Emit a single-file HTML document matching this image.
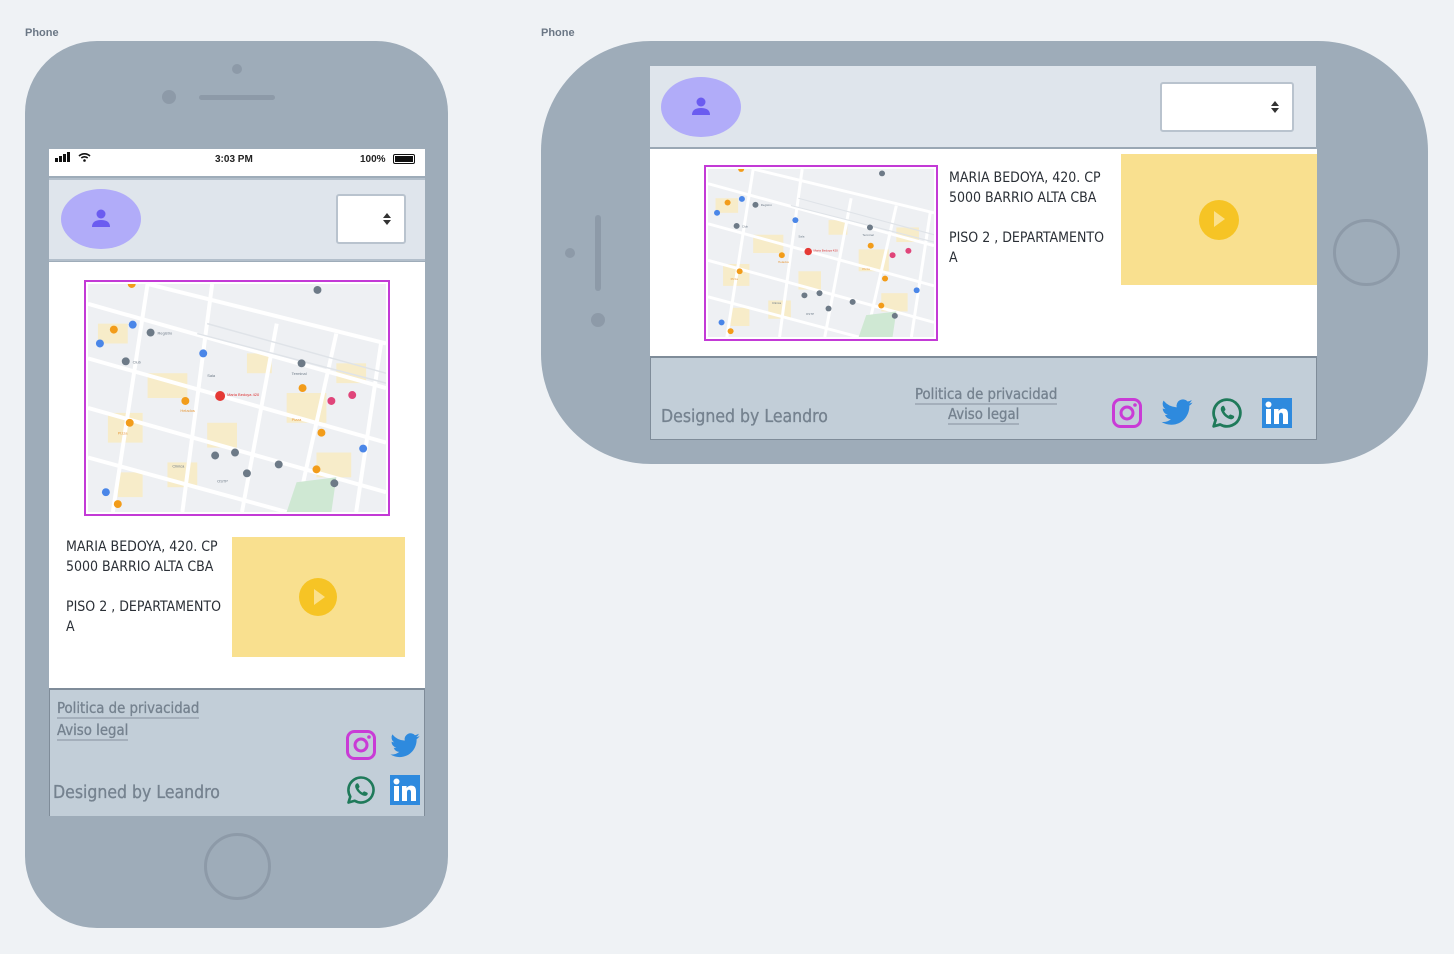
<!DOCTYPE html>
<html><head><meta charset="utf-8"><style>
*{margin:0;padding:0;box-sizing:border-box}
body{width:1454px;height:954px;background:#eff2f5;position:relative;overflow:hidden;font-family:"DejaVu Sans Condensed","Liberation Sans",sans-serif}
.a{position:absolute}
.lbl{font:bold 11px "Liberation Sans",sans-serif;color:#6b7785}
.phone{background:#9eacb9}
.hdr{background:#dfe5ec}
.ftr{background:#c2ced8}
.av{background:#b1acf9;border-radius:50%}
.sel{background:#fff;border:2px solid #b9c3ce;border-radius:3px}
.txt{font-size:14px;color:#2a2f36;line-height:20px;font-family:"DejaVu Sans Condensed","Liberation Sans",sans-serif}
.vid{background:#f9e08f}
.play{width:38px;height:38px;border-radius:50%;background:#f6c425}
.play:after{content:"";position:absolute;left:15px;top:11px;border-left:11px solid #fbe08c;border-top:8px solid transparent;border-bottom:8px solid transparent}
.lnk{font-size:14.8px;color:#75828f;border-bottom:2px solid #a4afbb;line-height:17px;-webkit-text-stroke:0.3px #75828f}
.des{font-size:17.5px;color:#75828f;-webkit-text-stroke:0.3px #75828f}
.home{border:3px solid #8d9aa8;border-radius:50%}
.mapbox{border:2px solid #c33ad6;background:#fff}
</style></head><body>
<svg width="0" height="0" style="position:absolute">
<defs>
<symbol id="map" viewBox="0 0 300 230" preserveAspectRatio="none">
<rect width="300" height="230" fill="#eef0f3"/>
<g fill="#f7ecc9">
<rect x="10" y="40" width="30" height="20"/><rect x="60" y="90" width="40" height="25"/><rect x="20" y="130" width="35" height="30"/><rect x="120" y="140" width="30" height="25"/><rect x="200" y="110" width="40" height="30"/><rect x="230" y="170" width="35" height="25"/><rect x="80" y="180" width="30" height="25"/><rect x="160" y="70" width="25" height="20"/><rect x="250" y="80" width="30" height="20"/><rect x="30" y="190" width="25" height="25"/>
</g>
<g stroke="#fff" stroke-width="4" fill="none">
<path d="M0 20 L300 105"/><path d="M0 75 L300 160"/><path d="M0 125 L300 210"/><path d="M0 175 L200 230"/><path d="M60 0 L300 60"/>
<path d="M60 0 L25 230"/><path d="M125 0 L95 230"/><path d="M190 40 L155 230"/><path d="M250 50 L210 230"/><path d="M295 60 L270 230"/>
</g>
<g stroke="#dfe3e8" stroke-width="1.5" fill="none"><path d="M120 40 L300 90"/><path d="M110 50 L300 100"/></g>
<path d="M210 200 L250 195 L245 230 L200 230Z" fill="#cfe8d3"/>
<g fill="#f29c1a"><circle cx="26" cy="46" r="4"/><circle cx="98" cy="118" r="4"/><circle cx="42" cy="140" r="4"/><circle cx="216" cy="105" r="4"/><circle cx="235" cy="150" r="4"/><circle cx="230" cy="187" r="4"/><circle cx="30" cy="222" r="4"/><circle cx="44" cy="0" r="4"/></g>
<g fill="#6d7a87"><circle cx="63" cy="49" r="4"/><circle cx="38" cy="78" r="4"/><circle cx="215" cy="80" r="4"/><circle cx="128" cy="173" r="4"/><circle cx="148" cy="170" r="4"/><circle cx="192" cy="182" r="4"/><circle cx="160" cy="191" r="4"/><circle cx="248" cy="201" r="4"/><circle cx="231" cy="6" r="4"/></g>
<g fill="#4a86e8"><circle cx="116" cy="70" r="4"/><circle cx="12" cy="60" r="4"/><circle cx="277" cy="166" r="4"/><circle cx="18" cy="210" r="4"/><circle cx="45" cy="41" r="4"/></g>
<g fill="#e0457a"><circle cx="266" cy="112" r="4"/><circle cx="245" cy="118" r="4"/></g>
<circle cx="133" cy="113" r="5" fill="#e53935"/>
<g fill="#e89a3b" font-size="4" font-family="Liberation Sans"><text x="93" y="129">Helados</text><text x="30" y="152">Pizza</text><text x="205" y="138">Pizza</text></g>
<g fill="#6d7a87" font-size="4" font-family="Liberation Sans"><text x="70" y="51">Registro</text><text x="45" y="80">Club</text><text x="120" y="94">Sala</text><text x="205" y="92">Terminal</text><text x="85" y="185">Clinica</text><text x="130" y="200">OSTP</text></g>
<text x="140" y="113" fill="#d33" font-size="4" font-family="Liberation Sans">Maria Bedoya 420</text>
</symbol>
</defs></svg>

<div class="a lbl" style="left:25px;top:27px">Phone</div>
<div class="a lbl" style="left:541px;top:27px">Phone</div>

<div class="a phone" style="left:25px;top:41px;width:423px;height:887px;border-radius:72px"></div>
<div class="a" style="left:232px;top:64px;width:10px;height:10px;border-radius:50%;background:#8d9aa8"></div>
<div class="a" style="left:162px;top:90px;width:14px;height:14px;border-radius:50%;background:#8d9aa8"></div>
<div class="a" style="left:199px;top:95px;width:76px;height:5px;border-radius:3px;background:#8d9aa8"></div>
<div class="a home" style="left:204px;top:833px;width:67px;height:67px"></div>

<div class="a" style="left:49px;top:149px;width:376px;height:27px;background:#fff;font:bold 10px 'Liberation Sans',sans-serif;color:#222">
  <div class="a" style="left:6px;top:9px;width:3px;height:4px;background:#111"></div>
  <div class="a" style="left:10px;top:7px;width:3px;height:6px;background:#111"></div>
  <div class="a" style="left:14px;top:5px;width:3px;height:8px;background:#111"></div>
  <div class="a" style="left:18px;top:3px;width:3px;height:10px;background:#111"></div>
  <svg class="a" style="left:29px;top:3px" width="13" height="10" viewBox="0 0 13 10"><path d="M1 4 A8 8 0 0 1 12 4" stroke="#111" stroke-width="1.6" fill="none"/><path d="M3.3 6 A5 5 0 0 1 9.7 6" stroke="#111" stroke-width="1.6" fill="none"/><circle cx="6.5" cy="8.5" r="1.3" fill="#111"/></svg>
  <div class="a" style="left:166px;top:5px">3:03 PM</div>
  <div class="a" style="left:311px;top:5px">100%</div>
  <div class="a" style="left:344px;top:5px;width:22px;height:10px;border:1px solid #111;border-radius:2px;padding:1px"><div style="width:100%;height:100%;background:#111"></div></div>
</div>
<div class="a hdr" style="left:49px;top:178px;width:376px;height:83px;border-top:2px solid #b3bfcb;border-bottom:2px solid #b3bfcb"></div>
<div class="a av" style="left:61px;top:189px;width:80px;height:60px"></div>
<svg class="a" style="left:91px;top:208px" width="20" height="20" viewBox="0 0 20 20"><circle cx="10" cy="6" r="4.5" fill="#6b5cf0"/><path d="M1 19 Q1 12 10 12 Q19 12 19 19Z" fill="#6b5cf0"/></svg>
<div class="a sel" style="left:336px;top:194px;width:70px;height:50px"></div>
<svg class="a" style="left:383px;top:213px" width="8" height="12"><path d="M4 0 L8 5 H0Z M0 7 H8 L4 12Z" fill="#333"/></svg>

<div class="a" style="left:49px;top:262px;width:376px;height:426px;background:#fff"></div>
<div class="a mapbox" style="left:84px;top:280px;width:306px;height:236px;padding:2px"><svg width="298" height="228"><use href="#map"/></svg></div>
<div class="a txt" style="left:66px;top:537px;width:162px">MARIA BEDOYA, 420. CP 5000 BARRIO ALTA CBA<br><br>PISO 2 , DEPARTAMENTO A</div>
<div class="a vid" style="left:232px;top:537px;width:173px;height:120px"></div>
<div class="a play" style="left:299px;top:578px"></div>

<div class="a ftr" style="left:49px;top:688px;width:376px;height:128px;border-top:2px solid #7f8c99;border-left:1px solid #7f8c99;border-right:1px solid #7f8c99"></div>
<div class="a lnk" style="left:57px;top:700px">Politica de privacidad</div>
<div class="a lnk" style="left:57px;top:722px">Aviso legal</div>
<div class="a des" style="left:53px;top:783px">Designed by Leandro</div>

<div class="a phone" style="left:541px;top:41px;width:887px;height:423px;border-radius:110px"></div>
<div class="a" style="left:565px;top:248px;width:10px;height:10px;border-radius:50%;background:#8d9aa8"></div>
<div class="a" style="left:595px;top:215px;width:6px;height:76px;border-radius:3px;background:#8d9aa8"></div>
<div class="a" style="left:591px;top:313px;width:14px;height:14px;border-radius:50%;background:#8d9aa8"></div>
<div class="a home" style="left:1333px;top:219px;width:67px;height:67px"></div>

<div class="a hdr" style="left:650px;top:66px;width:666px;height:83px;border-bottom:2px solid #9aa7b4"></div>
<div class="a av" style="left:661px;top:77px;width:80px;height:60px"></div>
<svg class="a" style="left:691px;top:96px" width="20" height="20" viewBox="0 0 20 20"><circle cx="10" cy="6" r="4.5" fill="#6b5cf0"/><path d="M1 19 Q1 12 10 12 Q19 12 19 19Z" fill="#6b5cf0"/></svg>
<div class="a sel" style="left:1160px;top:82px;width:134px;height:50px"></div>
<svg class="a" style="left:1271px;top:101px" width="8" height="12"><path d="M4 0 L8 5 H0Z M0 7 H8 L4 12Z" fill="#333"/></svg>

<div class="a" style="left:650px;top:149px;width:667px;height:207px;background:#fff"></div>
<div class="a mapbox" style="left:704px;top:165px;width:234px;height:176px;padding:2px"><svg width="226" height="168"><use href="#map"/></svg></div>
<div class="a txt" style="left:949px;top:168px;width:162px">MARIA BEDOYA, 420. CP 5000 BARRIO ALTA CBA<br><br>PISO 2 , DEPARTAMENTO A</div>
<div class="a vid" style="left:1121px;top:154px;width:196px;height:131px"></div>
<div class="a play" style="left:1199px;top:200px;width:40px;height:40px"></div>

<div class="a ftr" style="left:650px;top:356px;width:667px;height:84px;border:1px solid #7f8c99;border-top:2px solid #7f8c99"></div>
<div class="a des" style="left:661px;top:407px">Designed by Leandro</div>
<div class="a lnk" style="left:915px;top:386px">Politica de privacidad</div>
<div class="a lnk" style="left:948px;top:406px">Aviso legal</div>

<svg width="0" height="0" style="position:absolute"><defs>
<symbol id="ig" viewBox="0 0 30 30"><rect x="1.5" y="1.5" width="27" height="27" rx="7" fill="none" stroke="#c93bd6" stroke-width="3"/><circle cx="15" cy="15" r="6" fill="none" stroke="#c93bd6" stroke-width="3"/><circle cx="23" cy="7" r="1.8" fill="#c93bd6"/></symbol>
<symbol id="tw" viewBox="0 0 24 24"><path fill="#2e8ade" d="M23 4.6a9 9 0 0 1-2.6.7 4.5 4.5 0 0 0 2-2.5 9 9 0 0 1-2.9 1.1A4.5 4.5 0 0 0 11.8 8 12.8 12.8 0 0 1 2.5 3.3a4.5 4.5 0 0 0 1.4 6 4.5 4.5 0 0 1-2-.6v.1a4.5 4.5 0 0 0 3.6 4.4 4.5 4.5 0 0 1-2 .1 4.5 4.5 0 0 0 4.2 3.1A9 9 0 0 1 1 18.3 12.8 12.8 0 0 0 7.9 20.3c8.3 0 12.8-6.9 12.8-12.8v-.6A9 9 0 0 0 23 4.6z"/></symbol>
<symbol id="wa" viewBox="0 0 30 30"><path d="M15 2.5a12.5 12.5 0 1 1-6.3 23.3L2.5 27.5l1.8-5.9A12.5 12.5 0 0 1 15 2.5z" fill="none" stroke="#1f7a5a" stroke-width="2.6" stroke-linejoin="round"/><path d="M10.5 8.5c.8-.5 1.6-.3 2 .5l1 2.3c.2.6 0 1-.5 1.5l-.6.6c.8 1.8 2.4 3.4 4.2 4.2l.6-.6c.5-.5 1-.7 1.5-.5l2.3 1c.8.4 1 1.2.5 2-1 1.6-2.8 1.8-4.8.9-3.2-1.4-5.6-3.8-7-7-.9-2-.7-3.8.8-4.9z" fill="#1f7a5a"/></symbol>
<symbol id="li" viewBox="0 0 30 30"><rect width="30" height="30" fill="#2e8ade"/><rect x="4" y="11" width="5" height="15" fill="#fff"/><circle cx="6.5" cy="6.5" r="3" fill="#fff"/><path d="M12 11h4.6v2.2c.8-1.5 2.4-2.6 4.6-2.6 3.6 0 4.8 2.3 4.8 5.6V26h-5v-8.5c0-1.7-.5-2.8-2-2.8s-2 1.2-2 2.8V26h-5z" fill="#fff"/></symbol>
</defs></svg>
<svg class="a" style="left:346px;top:730px" width="30" height="30"><use href="#ig"/></svg>
<svg class="a" style="left:389px;top:730px" width="32" height="32"><use href="#tw"/></svg>
<svg class="a" style="left:346px;top:775px" width="30" height="30"><use href="#wa"/></svg>
<svg class="a" style="left:390px;top:775px" width="30" height="30"><use href="#li"/></svg>

<svg class="a" style="left:1112px;top:398px" width="30" height="30"><use href="#ig"/></svg>
<svg class="a" style="left:1160px;top:396px" width="34" height="34"><use href="#tw"/></svg>
<svg class="a" style="left:1211px;top:397px" width="32" height="32"><use href="#wa"/></svg>
<svg class="a" style="left:1262px;top:398px" width="30" height="30"><use href="#li"/></svg>
</body></html>
